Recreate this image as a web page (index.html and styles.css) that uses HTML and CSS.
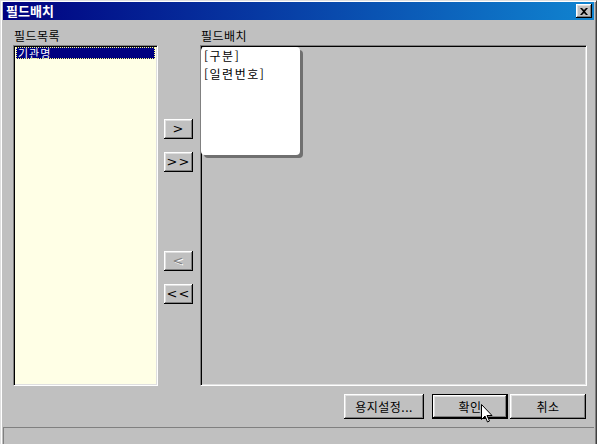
FILE: index.html
```html
<!DOCTYPE html>
<html lang="ko">
<head>
    <meta charset="UTF-8">
    <title>필드배치</title>
    <link rel="stylesheet" href="styles.css">
</head>
<body>
    <div class="window">
        <div class="titlebar">
            <span class="title">필드배치</span>
            <button class="close-btn">
                <svg width="8" height="7" viewBox="0 0 8 7">
                    <path d="M0 0h2l2 2 2-2h2L5 3.5 8 7H6L4 5 2 7H0l3-3.5z" fill="#000"/>
                </svg>
            </button>
        </div>

        <div class="content">
            <div class="list-col">
                <div class="label">필드목록</div>
                <div class="listbox">
                    <div class="item selected">기관명</div>
                </div>
            </div>

            <div class="move-col">
                <button class="btn small mt1">&gt;</button>
                <button class="btn small">&gt;&gt;</button>
                <button class="btn small mt2" disabled>&lt;</button>
                <button class="btn small">&lt;&lt;</button>
            </div>

            <div class="layout-col">
                <div class="label">필드배치</div>
                <div class="layout-panel">
                    <div class="card">
                        <div>[구분]</div>
                        <div>[일련번호]</div>
                    </div>
                </div>
            </div>
        </div>

        <div class="actions">
            <button class="btn wide paper">용지설정...</button>
            <button class="btn wide default">확인</button>
            <button class="btn wide">취소</button>
        </div>

        <div class="statusbar"></div>

        <!-- mouse pointer over the OK button -->
        <svg class="cursor" width="12" height="19" viewBox="0 0 12 19">
            <path d="M0.5 0.5v15l3.5-3.5 2.5 6 2-1-2.5-5.5h5z" fill="#fff" stroke="#000" stroke-width="1"/>
        </svg>
    </div>
</body>
</html>
```

FILE: styles.css
```css
body {
    margin: 0;
    width: 597px;
    height: 444px;
    overflow: hidden;
    background: #c0c0c0;
    font-family: "Noto Sans CJK KR", "Noto Sans", sans-serif;
    font-size: 12px;
    color: #000;
}
.window {
    position: relative;
    box-sizing: border-box;
    width: 597px;
    height: 460px;
    background: #c0c0c0;
    border-top: 1px solid #dfdfdf;
    border-left: 1px solid #dfdfdf;
    border-right: 1px solid #404040;
    box-shadow: inset 1px 1px 0 #fff, inset -1px 0 0 #808080;
    padding: 1px 2px 0 2px;
}
.titlebar {
    height: 18px;
    display: flex;
    align-items: center;
    justify-content: space-between;
    padding: 0 2px 0 3px;
    background: linear-gradient(to right, #000080, #1084d0);
}
.title {
    color: #fff;
    font-weight: bold;
    font-size: 13px;
    line-height: 18px;
}
.close-btn {
    width: 16px;
    height: 14px;
    padding: 0;
    display: flex;
    align-items: center;
    justify-content: center;
    background: #c0c0c0;
    border: none;
    box-shadow: inset -1px -1px 0 #000, inset 1px 1px 0 #fff, inset -2px -2px 0 #808080, inset 2px 2px 0 #dfdfdf;
}
.content {
    display: flex;
    padding: 10px 0 0 10px;
    height: 356px;
}
.label {
    height: 15px;
    line-height: 11px;
    padding-left: 1px;
    letter-spacing: 0.5px;
}
.list-col {
    width: 145px;
    display: flex;
    flex-direction: column;
}
.listbox {
    flex: 1;
    box-sizing: border-box;
    background: #ffffe6;
    border-top: 1px solid #808080;
    border-left: 1px solid #808080;
    border-right: 1px solid #fff;
    border-bottom: 1px solid #fff;
    box-shadow: inset 1px 1px 0 #000, inset -1px -1px 0 #dfdfdf;
    padding: 1px 2px;
}
.item {
    height: 12px;
    line-height: 13px;
    font-size: 11px;
    letter-spacing: 1px;
    padding-left: 2px;
}
.selected {
    background: #000080;
    color: #fff;
    outline: 1px dotted #ffff80;
    outline-offset: -1px;
}
.move-col {
    width: 29px;
    margin: 0 7px 0 6px;
    display: flex;
    flex-direction: column;
}
.btn {
    box-sizing: border-box;
    background: #c0c0c0;
    border: none;
    padding: 0;
    font-family: "Noto Sans CJK KR", "Noto Sans", sans-serif;
    font-size: 12px;
    letter-spacing: 0.5px;
    color: #000;
    box-shadow: inset -1px -1px 0 #000, inset 1px 1px 0 #fff, inset -2px -2px 0 #808080, inset 2px 2px 0 #dfdfdf;
}
.btn:disabled {
    color: #808080;
    text-shadow: 1px 1px 0 #fff;
}
.small {
    width: 29px;
    height: 20px;
    margin-bottom: 13px;
    font-family: "DejaVu Sans", sans-serif;
    font-size: 13px;
    letter-spacing: 1px;
    line-height: 18px;
}
.mt1 {
    margin-top: 89px;
}
.mt2 {
    margin-top: 66px;
}
.layout-col {
    width: 387px;
    display: flex;
    flex-direction: column;
}
.layout-panel {
    flex: 1;
    box-sizing: border-box;
    border-top: 1px solid #808080;
    border-left: 1px solid #808080;
    border-right: 1px solid #fff;
    border-bottom: 1px solid #fff;
    box-shadow: inset 1px 1px 0 #000, inset -1px -1px 0 #dfdfdf;
    padding: 1px 0 0 0;
}
.card {
    width: 96px;
    height: 108px;
    background: #fff;
    border-radius: 4px;
    box-shadow: 3px 3px 0 #707070;
    padding: 0 0 0 3px;
    font-size: 12px;
    line-height: 17.5px;
    letter-spacing: 1.5px;
    color: #000;
}
.actions {
    display: flex;
    justify-content: flex-end;
    gap: 2px;
    padding: 8px 8px 0 0;
}
.wide {
    width: 76px;
    height: 25px;
}
.paper {
    width: 80px;
    margin-right: 6px;
}
.default {
    box-shadow: inset 0 0 0 1px #000, inset -2px -2px 0 #000, inset 2px 2px 0 #fff, inset -3px -3px 0 #808080, inset 3px 3px 0 #dfdfdf;
}
.statusbar {
    margin-top: 8px;
    height: 20px;
    border-top: 1px solid #808080;
    border-left: 1px solid #808080;
}
.cursor {
    position: absolute;
    left: 480px;
    top: 403px;
}
```
